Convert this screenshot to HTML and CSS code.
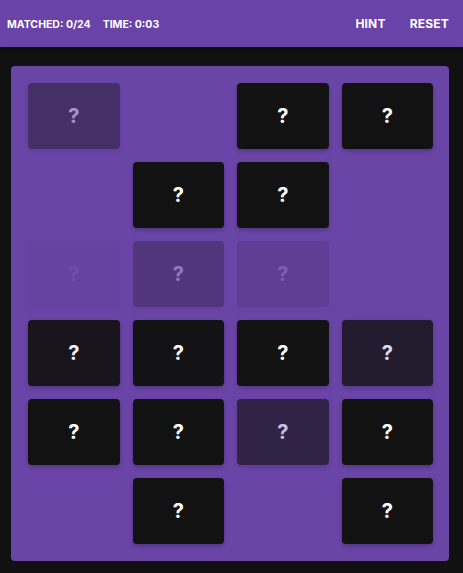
FILE: index.html
```html
<!DOCTYPE html>
<html>
<head>
<meta charset="utf-8">
<link rel="stylesheet" href="styles.css">
</head>
<body>
<header class="topbar">
  <div class="stats">
    <span>MATCHED: 0/24</span>
    <span>TIME: 0:03</span>
  </div>
  <nav class="actions">
    <button class="action">HINT</button>
    <button class="action">RESET</button>
  </nav>
</header>
<main class="board">
  <div class="card o45">?</div>
  <div class="card gone"></div>
  <div class="card">?</div>
  <div class="card">?</div>

  <div class="card gone"></div>
  <div class="card">?</div>
  <div class="card">?</div>
  <div class="card gone"></div>

  <div class="card o05">?</div>
  <div class="card o30">?</div>
  <div class="card o12">?</div>
  <div class="card gone"></div>

  <div class="card o95">?</div>
  <div class="card o98">?</div>
  <div class="card">?</div>
  <div class="card o82">?</div>

  <div class="card">?</div>
  <div class="card">?</div>
  <div class="card o68">?</div>
  <div class="card">?</div>

  <div class="card gone"></div>
  <div class="card">?</div>
  <div class="card gone"></div>
  <div class="card">?</div>
</main>
</body>
</html>
```
FILE: styles.css
```css
* { box-sizing: border-box; }
html, body { margin: 0; padding: 0; }
body {
  background: #111111;
  font-family: Inter, "Noto Sans", sans-serif;
  color: #ffffff;
  width: 463px;
  height: 573px;
  overflow: hidden;
}
.topbar {
  height: 47px;
  background: #6943a7;
  display: flex;
  align-items: center;
  justify-content: space-between;
  padding: 0 14px 0 7px;
  box-shadow: 0 2px 4px rgba(0,0,0,0.3);
}
.stats {
  display: flex;
  gap: 12px;
  font-size: 10.5px;
  font-weight: 700;
  letter-spacing: 0;
  padding-top: 2px;
}
.actions {
  display: flex;
  gap: 24px;
}
.action {
  background: none;
  border: 0;
  padding: 0;
  color: #ffffff;
  font-family: inherit;
  font-size: 12px;
  font-weight: 700;
  letter-spacing: 0.2px;
  cursor: pointer;
}
.board {
  margin: 19px 14px 0 11px;
  background: #6a45a8;
  border-radius: 4px;
  padding: 17px 16px 17px 17px;
  display: grid;
  grid-template-columns: repeat(4, 1fr);
  grid-auto-rows: 66px;
  column-gap: 13px;
  row-gap: 13px;
}
.card {
  background: #121212;
  border-radius: 4px;
  display: flex;
  align-items: center;
  justify-content: center;
  font-size: 20px;
  font-weight: 700;
  color: #ffffff;
  box-shadow: 0 2px 5px rgba(0,0,0,0.25);
}
.card.gone { visibility: hidden; }
.o05 { opacity: 0.04; }
.o12 { opacity: 0.13; }
.o30 { opacity: 0.28; }
.o45 { opacity: 0.42; }
.o68 { opacity: 0.65; }
.o82 { opacity: 0.8; }
.o95 { opacity: 0.93; }
.o98 { opacity: 0.98; }
```
